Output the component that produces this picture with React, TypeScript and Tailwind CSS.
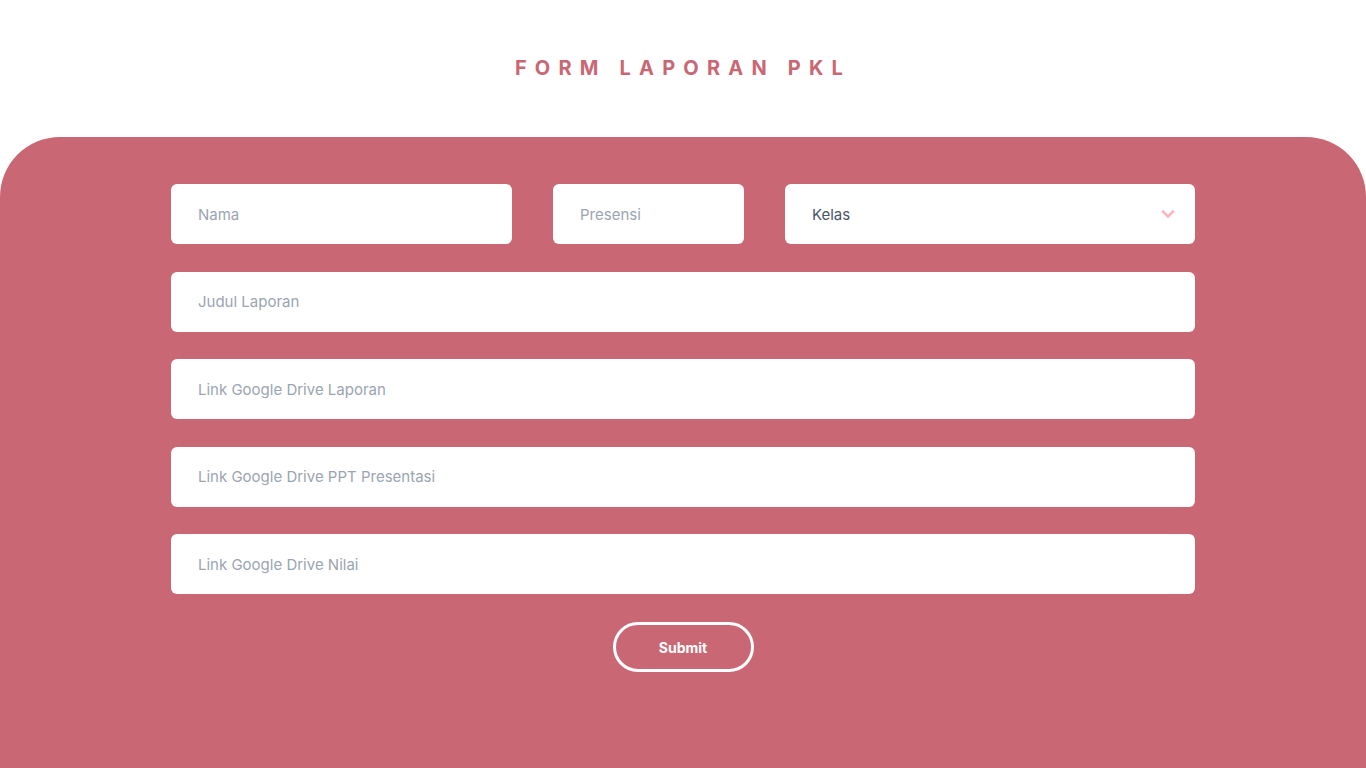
import React from "react";

const fields = [
  "Judul Laporan",
  "Link Google Drive Laporan",
  "Link Google Drive PPT Presentasi",
  "Link Google Drive Nilai",
];

const inputCls =
  "h-[60px] w-full rounded-md bg-white px-[27px] text-[15px] text-[#4a5568] outline-none placeholder:text-[#9aa5b1]";

export default function App() {
  return (
    <div
      className="min-h-screen bg-white"
      style={{ fontFamily: "Inter, 'Noto Sans', sans-serif" }}
    >
      {/* Title */}
      <div className="flex h-[137px] items-start justify-center pt-[53px]">
        <h1 className="text-[20px] font-bold uppercase tracking-[0.41em] text-[#c96874]">
          Form Laporan PKL
        </h1>
      </div>

      {/* Form panel */}
      <section className="min-h-[631px] rounded-t-[60px] bg-[#c96874] pt-[47px] pb-10">
        <form className="mx-auto flex w-[1024px] flex-col">
          <div className="grid grid-cols-[341px_191px_410px] gap-[41px]">
            <input className={inputCls} placeholder="Nama" />
            <input className={inputCls} placeholder="Presensi" />
            <div className="relative">
              <select className={inputCls + " appearance-none pt-[2px]"} defaultValue="">
                <option value="">Kelas</option>
                <option>XII RPL 1</option>
                <option>XII RPL 2</option>
              </select>
              <svg
                className="pointer-events-none absolute right-[20px] top-1/2 -translate-y-1/2"
                width="14"
                height="10"
                viewBox="0 0 14 10"
                fill="none"
                stroke="#f7b8c0"
                strokeWidth="2.6"
                strokeLinecap="round"
                strokeLinejoin="round"
              >
                <path d="M2 2.5l5 5 5-5" />
              </svg>
            </div>
          </div>

          {fields.map((f) => (
            <input key={f} className={inputCls + " mt-[27.5px]"} placeholder={f} />
          ))}

          <div className="mt-[28px] flex justify-center">
            <button
              type="button"
              className="h-[50px] w-[141px] rounded-full border-[3px] border-white text-[14px] font-bold text-white"
            >
              Submit
            </button>
          </div>
        </form>
      </section>
    </div>
  );
}
